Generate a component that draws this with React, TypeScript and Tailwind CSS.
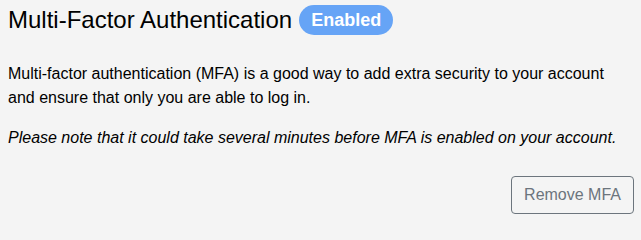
export default function App() {
  return (
    <div className="min-h-screen w-full bg-[#f4f4f4] px-2 pt-[5px] font-['Liberation_Sans',Arial,sans-serif] text-black">
      <div className="flex items-center">
        <h2 className="text-[24px] leading-[30px]">Multi-Factor Authentication</h2>
        <span className="ml-[7px] rounded-full bg-[#66a4f6] px-[12px] text-[18px] font-bold leading-[30px] text-white">
          Enabled
        </span>
      </div>
      <p className="mt-[27px] text-[16px] leading-[24px]">
        Multi-factor authentication (MFA) is a good way to add extra security to your account and ensure that only you are able to log in.
      </p>
      <p className="mt-[16px] text-[16px] italic leading-[24px]">
        Please note that it could take several minutes before MFA is enabled on your account.
      </p>
      <div className="mt-[26px] -mr-px flex justify-end">
        <button className="h-[38px] rounded-[4px] border border-[#6c757d] px-[12px] text-[16px] text-[#6c757d]">
          Remove MFA
        </button>
      </div>
    </div>
  );
}
